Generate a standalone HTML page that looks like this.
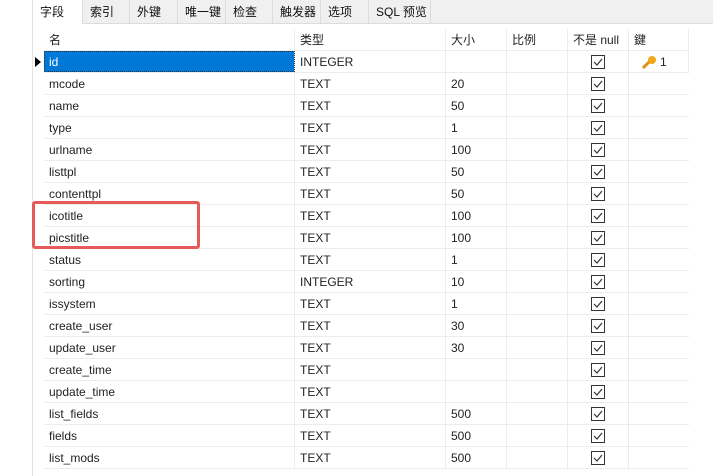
<!DOCTYPE html>
<html><head><meta charset="utf-8"><style>
body{margin:0;width:713px;height:476px;overflow:hidden;background:#fff;font-family:"Liberation Sans","Noto Sans CJK SC",sans-serif;font-size:12px;color:#000;position:relative}
.abs{position:absolute}
.tabbar{left:33px;top:0;width:680px;height:23px;background:#f0f0f0;border-bottom:1px solid #dcdcdc}
.tab{position:absolute;top:0;height:23px;line-height:24px;padding-left:7px;border-right:1px solid #dcdcdc;box-sizing:border-box;font-size:12px;color:#111}
.vline{left:32px;top:0;width:1px;height:476px;background:#e3e3e3}
.row{position:absolute;left:44px;width:645px;height:22px;border-bottom:1px solid #ececec;box-sizing:border-box}
.c{position:absolute;top:0;height:22px;line-height:23px;padding-left:5px;box-sizing:border-box;border-right:1px solid #ececec;white-space:nowrap;color:#222}
.cb{position:absolute;left:23px;top:4px;width:12px;height:12px;border:1px solid #333}
</style></head><body>
<div class="abs vline"></div>
<div class="abs tabbar">
<div class="tab" style="left:0;width:50px;background:#fff;height:24px">字段</div>
<div class="tab" style="left:50px;width:47px">索引</div>
<div class="tab" style="left:97px;width:48px">外键</div>
<div class="tab" style="left:145px;width:48px">唯一键</div>
<div class="tab" style="left:193px;width:47px">检查</div>
<div class="tab" style="left:240px;width:48px">触发器</div>
<div class="tab" style="left:288px;width:48px">选项</div>
<div class="tab" style="left:336px;width:62px">SQL 预览</div>
</div>
<div id="g"></div>
<div class="abs" style="left:32px;top:201px;width:168px;height:48px;border:3px solid #e85a5a;border-radius:3px;box-sizing:border-box"></div>
<script>
var rows=[["名","类型","大小","比例","不是 null","鍵"],
["id","INTEGER","","","x","k"],["mcode","TEXT","20","","x"],["name","TEXT","50","","x"],["type","TEXT","1","","x"],["urlname","TEXT","100","","x"],["listtpl","TEXT","50","","x"],["contenttpl","TEXT","50","","x"],["icotitle","TEXT","100","","x"],["picstitle","TEXT","100","","x"],["status","TEXT","1","","x"],["sorting","INTEGER","10","","x"],["issystem","TEXT","1","","x"],["create_user","TEXT","30","","x"],["update_user","TEXT","30","","x"],["create_time","TEXT","","","x"],["update_time","TEXT","","","x"],["list_fields","TEXT","500","","x"],["fields","TEXT","500","","x"],["list_mods","TEXT","500","","x"]];
var cols=[[0,251],[251,151],[402,61],[463,61],[524,61],[585,60]];
var h="";
rows.forEach(function(r,i){
 var top=29+i*22;
 h+='<div class="row" style="top:'+top+'px">';
 r.forEach(function(t,j){
  var st='left:'+cols[j][0]+'px;width:'+cols[j][1]+'px;';
  var inner=t;
  if(i==1&&j==0){st+='background:#0078d7;color:#fff;outline:1px dotted #333;outline-offset:-1px;height:21px;';}
  if(i>0&&j==4){inner=t=='x'?'<div class="cb"><svg width="12" height="12" style="position:absolute;left:0;top:0"><path d="M2 6L5 9L10 3" stroke="#333" fill="none" stroke-width="1.2"/></svg></div>':'';}
  if(i>0&&j==5){inner=t=='k'?'<svg width="16" height="14" style="position:absolute;left:12px;top:4px"><circle cx="11" cy="5" r="4" fill="#f0a818"/><path d="M8 7L2 13" stroke="#e09010" stroke-width="3"/></svg><span style="position:absolute;left:31px">1</span>':'';}
  h+='<div class="c" style="'+st+'">'+inner+'</div>';
 });
 h+='</div>';
});
h+='<div class="abs" style="left:35px;top:57px;width:0;height:0;border-top:5px solid transparent;border-bottom:5px solid transparent;border-left:6px solid #000"></div>';
document.getElementById('g').innerHTML=h;
</script>
</body></html>
